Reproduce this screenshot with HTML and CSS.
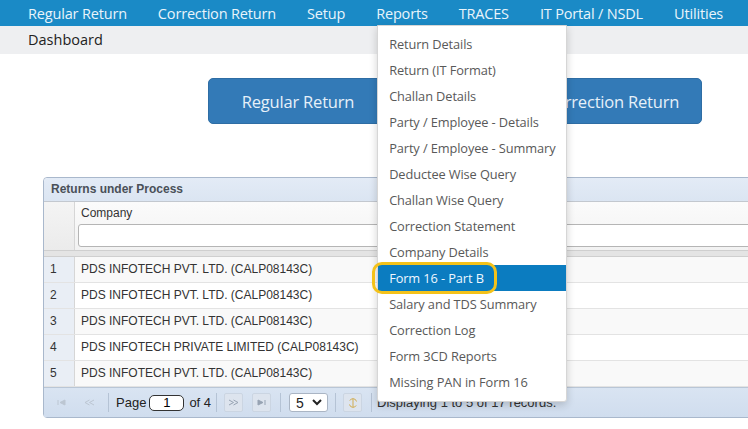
FILE: index.html
```html
<!DOCTYPE html>
<html lang="en">
<head>
    <meta charset="UTF-8">
    <title>TDS - Dashboard</title>
    <link rel="stylesheet" href="styles.css">
</head>
<body>
    <nav class="topnav">
        <span class="nav-item">Regular Return</span>
        <span class="nav-item">Correction Return</span>
        <span class="nav-item">Setup</span>
        <span class="nav-item nav-open">Reports
            <ul class="dropdown">
                <li>Return Details</li>
                <li>Return (IT Format)</li>
                <li>Challan Details</li>
                <li>Party / Employee - Details</li>
                <li>Party / Employee - Summary</li>
                <li>Deductee Wise Query</li>
                <li>Challan Wise Query</li>
                <li>Correction Statement</li>
                <li>Company Details</li>
                <li class="active">Form 16 - Part B<span class="ring"></span></li>
                <li>Salary and TDS Summary</li>
                <li>Correction Log</li>
                <li>Form 3CD Reports</li>
                <li>Missing PAN in Form 16</li>
            </ul>
        </span>
        <span class="nav-item">TRACES</span>
        <span class="nav-item">IT Portal / NSDL</span>
        <span class="nav-item">Utilities</span>
    </nav>
    <div class="subbar">Dashboard</div>

    <div class="actions">
        <button class="big-btn">Regular Return</button>
        <button class="big-btn">Correction Return</button>
    </div>

    <div class="grid">
        <div class="grid-title">Returns under Process</div>
        <div class="grid-head">
            <div class="rn-head"></div>
            <div class="col-head">
                <div class="col-label">Company</div>
                <input class="filter" type="text">
            </div>
        </div>
        <div class="grid-band"></div>
        <div class="grid-row"><div class="rn">1</div><div class="cell">PDS INFOTECH PVT. LTD. (CALP08143C)</div></div>
        <div class="grid-row"><div class="rn">2</div><div class="cell">PDS INFOTECH PVT. LTD. (CALP08143C)</div></div>
        <div class="grid-row"><div class="rn">3</div><div class="cell">PDS INFOTECH PVT. LTD. (CALP08143C)</div></div>
        <div class="grid-row"><div class="rn">4</div><div class="cell">PDS INFOTECH PRIVATE LIMITED (CALP08143C)</div></div>
        <div class="grid-row"><div class="rn">5</div><div class="cell">PDS INFOTECH PVT. LTD. (CALP08143C)</div></div>
        <div class="pager">
            <span class="pg-icon off">
                <svg width="9" height="7" viewBox="0 0 9 7"><path d="M1 1v5M8 1L3 3.5 8 6z" stroke="#bcc6d2" fill="#bcc6d2"/></svg>
            </span>
            <span class="pg-icon off">
                <svg width="11" height="7" viewBox="0 0 11 7"><path d="M5.5 1L1 3.5 5.5 6M10 1L5.5 3.5 10 6" stroke="#bcc6d2" fill="none"/></svg>
            </span>
            <span class="pg-sep"></span>
            <span class="pg-text">Page</span>
            <input class="pg-input" type="text" value="1">
            <span class="pg-text of">of 4</span>
            <span class="pg-sep"></span>
            <span class="pg-icon btn">
                <svg width="11" height="7" viewBox="0 0 11 7"><path d="M1 1l4.5 2.5L1 6M5.5 1L10 3.5 5.5 6" stroke="#97a3b3" fill="none"/></svg>
            </span>
            <span class="pg-icon btn">
                <svg width="9" height="7" viewBox="0 0 9 7"><path d="M1 1l5 2.5L1 6zM8 1v5" stroke="#97a3b3" fill="#97a3b3"/></svg>
            </span>
            <span class="pg-sep"></span>
            <span class="pg-select">5
                <svg width="10" height="7" viewBox="0 0 10 7"><path d="M1 1l4 4 4-4" stroke="#222" stroke-width="2" fill="none"/></svg>
            </span>
            <span class="pg-sep"></span>
            <span class="pg-icon btn">
                <svg width="12" height="12" viewBox="0 0 12 12"><path d="M9.5 4.5A3.6 3.6 0 0 0 2.8 3.6M2.5 7.5A3.6 3.6 0 0 0 9.2 8.4M6 1.5v9" stroke="#d1ad52" fill="none"/></svg>
            </span>
            <span class="pg-sep"></span>
            <span class="pg-info">Displaying 1 to 5 of 17 records.</span>
        </div>
    </div>
</body>
</html>
```

FILE: styles.css
```css
body {
    margin: 0;
    font-family: "Open Sans", "Noto Sans", sans-serif;
    background: #ffffff;
    width: 748px;
    height: 429px;
    overflow: hidden;
}

.topnav {
    display: flex;
    align-items: center;
    height: 26px;
    padding-left: 28px;
    gap: 31px;
    background-color: #1a8ac6;
    position: relative;
    z-index: 5;
}

.nav-item {
    color: #e9f4fb;
    font-size: 14.5px;
    letter-spacing: -0.17px;
    white-space: nowrap;
}

.nav-open {
    position: relative;
}

.dropdown {
    position: absolute;
    top: 21px;
    left: 1px;
    width: 188px;
    margin: 0;
    padding: 5px 0 6px;
    list-style: none;
    background: #ffffff;
    border: 1px solid #d6d6d6;
    border-radius: 0 0 3px 3px;
    box-shadow: 0 3px 8px rgba(0, 0, 0, 0.18);
}

.dropdown li {
    position: relative;
    height: 26px;
    line-height: 26px;
    padding-left: 11px;
    font-size: 12.8px;
    color: #595959;
    letter-spacing: -0.1px;
}

.dropdown li.active {
    background-color: #0b7cc0;
    color: #eef7ff;
}

.ring {
    position: absolute;
    left: -6px;
    top: -3px;
    width: 119px;
    height: 26px;
    border: 3px solid #f4c21a;
    border-radius: 10px;
}

.subbar {
    height: 28px;
    line-height: 28px;
    padding-left: 28px;
    background-color: #eeeff1;
    color: #222222;
    font-size: 14.5px;
}

.actions {
    display: flex;
    gap: 134px;
    padding-left: 208px;
    margin-top: 24px;
}

.big-btn {
    width: 180px;
    height: 46px;
    background-color: #337ab7;
    border: 1px solid #2e6da4;
    border-radius: 5px;
    color: #e6f0f9;
    font-family: "Open Sans", "Noto Sans", sans-serif;
    font-size: 16.5px;
    letter-spacing: -0.2px;
}

/* grid */
.grid {
    margin: 53px 0 0 43px;
    width: 740px;
    border: 1px solid #a9b8cc;
    border-radius: 4px 0 0 4px;
    font-family: "Liberation Sans", Arial, sans-serif;
    font-size: 12px;
    color: #333333;
}

.grid-title {
    height: 23px;
    line-height: 23px;
    padding-left: 7px;
    font-weight: bold;
    color: #4a5058;
    background: linear-gradient(#e3ebf6, #dbe5f2);
    border-bottom: 1px solid #c3c8cf;
    border-radius: 4px 0 0 0;
}

.grid-head {
    display: flex;
    height: 48px;
    background: linear-gradient(#fbfbfb, #f2f2f2);
}

.rn-head {
    width: 30px;
    border-right: 1px solid #d6d6d6;
    background: linear-gradient(#f4f4f4, #ebebeb);
}

.col-head {
    flex: 1;
    padding: 4px 0 0 3px;
}

.col-label {
    padding-left: 3px;
    height: 18px;
}

.filter {
    display: block;
    width: 100%;
    height: 19px;
    margin: 0;
    border: 1px solid #b5b5b5;
    border-radius: 3px;
    background: #ffffff;
    box-sizing: content-box;
}

.grid-band {
    height: 5px;
    background: #e4e4e4;
    border-top: 1px solid #cfcfcf;
    border-bottom: 1px solid #cfcfcf;
}

.grid-row {
    display: flex;
    height: 25px;
    line-height: 25px;
    border-bottom: 1px solid #e3e3e3;
}

.grid-row:nth-child(odd) .cell {
    background: #ffffff;
}

.grid-row:nth-child(even) .cell {
    background: #f9f9f9;
}

.rn {
    width: 24px;
    padding-left: 6px;
    background: #e9eef5;
    border-right: 1px solid #d6d6d6;
}

.cell {
    flex: 1;
    padding-left: 6px;
}

/* pager */
.pager {
    display: flex;
    align-items: center;
    height: 29px;
    padding-left: 8px;
    background: linear-gradient(#d9e4f2, #d0ddee);
    border-top: 1px solid #b9c6d6;
    font-size: 13px;
    color: #222;
}

.pg-icon {
    display: flex;
    align-items: center;
    justify-content: center;
    box-sizing: border-box;
    width: 19px;
    height: 19px;
    margin-right: 9px;
    border-radius: 2px;
}

.pg-icon.btn {
    background: #dde4ee;
    border: 1px solid #cbd5e2;
}

.pg-sep {
    width: 1px;
    height: 19px;
    background: #b5c3d5;
    margin-right: 7px;
}

.pg-text {
    margin-right: 0;
}

.pg-text.of {
    margin-right: 5px;
}

.pg-input {
    box-sizing: border-box;
    width: 35px;
    height: 16px;
    margin: 0 5px 0 3px;
    padding: 0;
    text-align: center;
    font-family: "Liberation Sans", Arial, sans-serif;
    font-size: 13px;
    border: 1px solid #333;
    border-radius: 5px;
    background: #ffffff;
}

.pg-select {
    display: flex;
    align-items: center;
    justify-content: space-between;
    box-sizing: border-box;
    height: 19px;
    width: 39px;
    padding: 0 5px 0 6px;
    margin: 0 7px 0 1px;
    background: #ffffff;
    border: 1px solid #aab5c4;
    border-radius: 3px;
    font-size: 14px;
}

.pg-info {
    margin-left: -2px;
    color: #333;
    white-space: nowrap;
}
```
